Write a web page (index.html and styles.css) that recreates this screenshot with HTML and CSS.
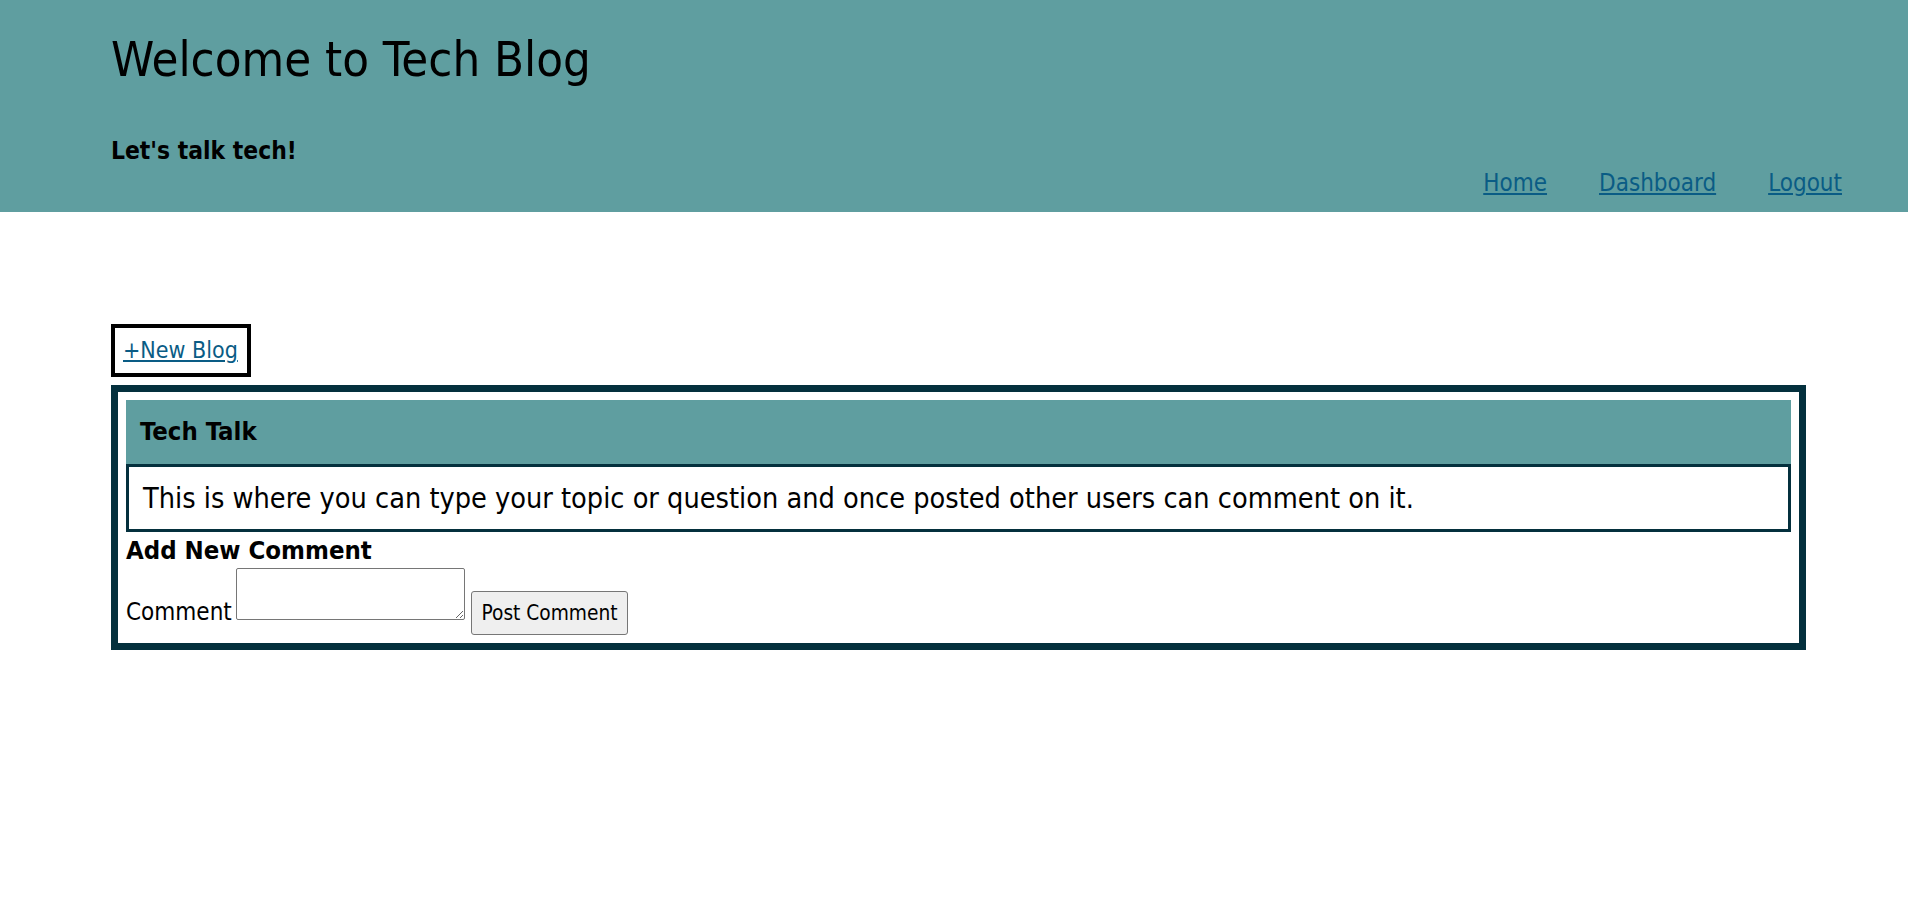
FILE: index.html
```html
<!DOCTYPE html>
<html lang="en">
<head>
<meta charset="utf-8">
<title>Tech Blog</title>
<link rel="stylesheet" href="styles.css">
</head>
<body>
<header class="site-header">
  <div class="brand">
    <h1 class="title">Welcome to Tech Blog</h1>
    <p class="tagline">Let's talk tech!</p>
  </div>
  <nav class="nav">
    <a href="#">Home</a>
    <a href="#">Dashboard</a>
    <a href="#">Logout</a>
  </nav>
</header>
<main class="main">
  <div class="new-blog"><a href="#">+New Blog</a></div>
  <section class="card">
    <h2 class="card-title">Tech Talk</h2>
    <div class="card-body">This is where you can type your topic or question and once posted other users can comment on it.</div>
    <h3 class="comment-heading">Add New Comment</h3>
    <form class="comment-form">
      <label for="c">Comment</label> <textarea id="c" class="comment-input"></textarea> <button type="button" class="comment-btn">Post Comment</button>
    </form>
  </section>
</main>
</body>
</html>
```
FILE: styles.css
```css
* { box-sizing: border-box; }
body {
  margin: 0;
  font-family: "DejaVu Sans Condensed", "DejaVu Sans", sans-serif;
  font-stretch: condensed;
  color: #000;
  background: #fff;
}
a { color: #0a5c85; }

.site-header {
  height: 212px;
  background: #5f9ea0;
  display: flex;
  justify-content: space-between;
  align-items: flex-end;
  padding: 0 66px 0 111px;
}
.brand { align-self: flex-start; }
.title {
  margin: 33px 0 0;
  font-size: 48.7px;
  line-height: 52px;
  font-weight: normal;
}
.tagline {
  margin: 50px 0 0;
  font-size: 24.4px;
  line-height: 32px;
  font-weight: bold;
}
.nav {
  display: flex;
  gap: 52px;
  margin-bottom: 15px;
  font-size: 24px;
  line-height: 28px;
}

.main { padding: 112px 102px 0 111px; }
.new-blog {
  display: inline-block;
  border: 4px solid #000;
  padding: 0 9px 0 8px;
  font-size: 23px;
  line-height: 45px;
  vertical-align: top;
}
.card {
  margin-top: 8px;
  border: 7px solid #04303d;
  padding: 8px;
}
.card-title {
  margin: 0;
  height: 64px;
  background: #5f9ea0;
  padding-left: 14px;
  font-size: 25.5px;
  line-height: 62px;
  font-weight: bold;
}
.card-body {
  border: 3px solid #04303d;
  padding-left: 14px;
  font-size: 28.6px;
  line-height: 62px;
}
.comment-heading {
  margin: 4px 0 0;
  font-size: 25.5px;
  line-height: 28px;
  font-weight: bold;
}
.comment-form {
  font-size: 24px;
  line-height: 30px;
  word-spacing: -3px;
}
.comment-input {
  width: 229px;
  height: 52px;
  margin: 4px 0 0;
  border: 1px solid #767676;
  border-radius: 2px;
  vertical-align: baseline;
  font-family: inherit;
}
.comment-btn {
  height: 44px;
  margin-left: 2px;
  padding: 0 10px;
  font-family: inherit;
  font-size: 20.7px;
  word-spacing: normal;
  background: #efefef;
  border: 1px solid #767676;
  border-radius: 3px;
  color: #000;
}
```
